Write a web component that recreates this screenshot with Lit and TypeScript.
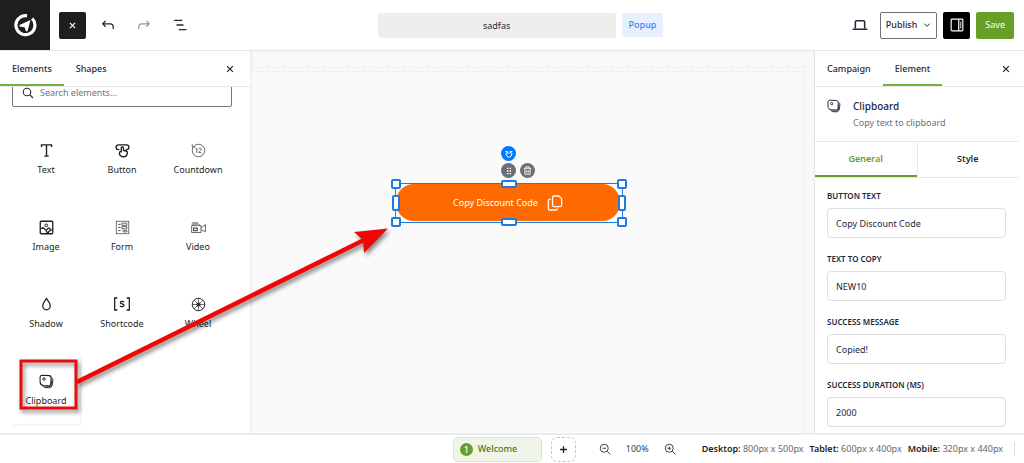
import { LitElement, html, css, svg, nothing } from "lit";
import { customElement, property, state } from "lit/decorators.js";
import { classMap } from "lit/directives/class-map.js";

const glyphs: Record<string, unknown> = {
  text: svg`<path d="M4 6.500V3h16v3.500M12 3v18M8.500 21h7" stroke-width="2.200"/>`,
  button: svg`<path d="M7 10.500H5.500a3.700 3.700 0 0 1 0-7.500h13a3.700 3.700 0 0 1 0 7.500H17M10 15V7.500a1.800 1.800 0 0 1 3.500 0V12l4 .8c1.500.3 2.500 1.200 2.300 3-.3 3.500-2 6.200-5.800 6.200-4.500 0-7-2.500-7-6 0-1.800 1-2.500 3-2.500" stroke-width="2.100"/>`,
  countdown: svg`<circle cx="12" cy="12" r="10" stroke-width="1.400"/><path d="M2 2v4.500h5M7.500 9.500l1.800-1.200V16M12.500 10c0-2.200 4-2.200 4 0 0 1.700-4 3.200-4 5.500h4.300" stroke-width="1.400"/>`,
  image: svg`<rect x="2" y="2" width="20" height="20" rx="1.500" stroke-width="2.100"/><circle cx="11.500" cy="8.500" r="2.200" stroke-width="1.600"/><path d="M3 14l3.500-2 5 5 2 4M12 16c1-2 3-3.500 4.500-3s1 2 2 2.500 2.500 0 3 1M15 21c0-3 2-4.500 4-4" stroke-width="2"/>`,
  form: svg`<rect x="2" y="2" width="20" height="20" stroke-width="1.300"/><path d="M5 7h4M5 12h4M5 17h4" stroke-width="1.600"/><path d="M11 5h8v3.500h-8zM11 10.500h8V14h-8zM13 16.500h6V19h-6z" stroke-width="1.400"/>`,
  video: svg`<path d="M1 9h15v11H1zM3 9V6.500h9L15 9M1 6l2-1.500h8M16 13l3.500-3.500H21L23 7v12l-2-1.500h-1.500L16 15" stroke-width="1.400"/><path d="M4 13h6v4H4z" stroke-width="1.900"/>`,
  shadow: svg`<path d="M12 2.500c3 4 6 7.500 6 11.500a6 6.500 0 0 1-12 0c0-4 3-7.500 6-11.500z" stroke-width="2"/>`,
  shortcode: svg`<path d="M5 3H1v18h4M19 3h4v18h-4" stroke-width="1.900"/><path d="M15 9c-1-1.200-5.500-1.400-5.500 1s5.500 1.500 5.500 4-4.800 2.400-6 .8" stroke-width="1.900"/>`,
  wheel: svg`<circle cx="12" cy="12" r="10" stroke-width="1.500"/><circle cx="12" cy="12" r="2.500" stroke-width="1.800"/><path d="M12 2v20M2 12h20M5 5l14 14M19 5L5 19" stroke-width="1"/>`,
  clipboard: svg`<path d="M5.500 2l10.500.6c2.300.2 3.400 1.300 3.300 3.400l-.5 9.500c-.2 2.400-1.300 3.500-3.500 3.300L7 18.500C4 18 2 16 1.800 13L1.700 6C1.700 3.200 2.800 2 5.500 2z" stroke-width="1.700"/><circle cx="8" cy="8" r="2" stroke-width="1.500"/><path d="M19.500 5.500c2 1 2.800 2.500 2.600 4.500l-.8 7c-.6 3.400-2.400 5-5.800 5l-5-.3c-2-.2-4-1.400-5-3.400M20.700 9l-.8 8c-.4 2.500-1.500 3.500-4 3.500H9" stroke-width="1.500"/>`,
  close: svg`<path d="M5 5l14 14M19 5L5 19" stroke-width="3"/>`,
  undo: svg`<path d="M8 5L3 10l5 5M3 10h13c3.500 0 5 2 5 5v4" stroke-width="2.200"/>`,
  redo: svg`<path d="M16 5l5 5-5 5M21 10H8c-3.500 0-5 2-5 5v4" stroke-width="2"/>`,
  outline: svg`<path d="M2 4h14M6 12h12M10 20h13" stroke-width="2.400"/>`,
  laptop: svg`<path d="M5 17V7.500C5 6 5.500 5.500 7 5.500h10c1.500 0 2 .5 2 2V17M1 18.500h22" stroke-width="2.300"/>`,
  panel: svg`<rect x="2" y="2" width="20" height="20" rx="1.500" stroke-width="2"/><path d="M15 2v20" stroke-width="2"/><path d="M18.500 6v12" stroke-width="1.500"/>`,
  chevron: svg`<path d="M4 8l8 8 8-8" stroke-width="3"/>`,
  search: svg`<circle cx="10" cy="10" r="7.500" stroke-width="2.200"/><path d="M16 16l6 6" stroke-width="2.200"/>`,
  zoomOut: svg`<circle cx="10.500" cy="10.500" r="8" stroke-width="2"/><path d="M16.500 16.500l6 6M7 10.500h7" stroke-width="2"/>`,
  zoomIn: svg`<circle cx="10.500" cy="10.500" r="8" stroke-width="2"/><path d="M16.500 16.500l6 6M7 10.500h7M10.500 7v7" stroke-width="2"/>`,
  plus: svg`<path d="M12 3v18M3 12h18" stroke-width="3.500"/>`,
  rotate: svg`<path d="M16 5.500A8.500 8.500 0 1 1 6.500 6.500M1 5h7.500v7.500M15.500 12V4.500H22" stroke-width="3"/>`,
  grip: svg`<path d="M8 2v4M16 2v4M8 10v4M16 10v4M8 18v4M16 18v4" stroke-width="4.500"/>`,
  trash: svg`<path d="M2 6h20M8 5V2h8v3M5 6v16h14V6M10 11v7M14 11v7" stroke-width="2.400"/>`,
  copy: svg`<path d="M10.500 1.500h7.500l4 4V15c0 1.500-.7 2.300-2.200 2.300h-9.300C9 17.300 8.300 16.500 8.300 15V3.800c0-1.500.7-2.300 2.200-2.300z" stroke-width="1.900"/><path d="M5.500 6.500H4.200C2.700 6.500 2 7.200 2 8.700v11.500c0 1.500.7 2.300 2.200 2.300h9.300c1.500 0 2.200-.8 2.200-2.200" stroke-width="1.900"/>`,
};

@customElement("app-icon")
class AppIcon extends LitElement {
  @property() name = "";
  @property({ type: Number }) size = 12;
  static styles = css`
    :host { display: inline-flex; flex: none; }
    svg { display: block; fill: none; stroke: currentColor; }
  `;
  render() {
    return html`<svg width=${this.size} height=${this.size} viewBox="0 0 24 24" aria-hidden="true">${glyphs[this.name] ?? nothing}</svg>`;
  }
}

@customElement("app-root")
class AppRoot extends LitElement {
  @state() private fields = [
    { id: "button-text", label: "BUTTON TEXT", value: "Copy Discount Code" },
    { id: "copy-text", label: "TEXT TO COPY", value: "NEW10" },
    { id: "success-message", label: "SUCCESS MESSAGE", value: "Copied!" },
    { id: "success-duration", label: "SUCCESS DURATION (MS)", value: "2000" },
  ];

  private elements = ["Text", "Button", "Countdown", "Image", "Form", "Video", "Shadow", "Shortcode", "Wheel", "Clipboard"];
  private faint = ["Countdown", "Form", "Video"];

  static styles = css`
    :host {
      display: grid;
      grid-template-rows: 50px minmax(0, 1fr) 30px;
      position: relative;
      height: 100vh;
      overflow: hidden;
      background: #fff;
      color: #1e293b;
      font: 9px/14px "Noto Sans", "Open Sans", sans-serif;
    }
    * { box-sizing: border-box; }
    button, input { font: inherit; color: inherit; margin: 0; }
    button { display: flex; align-items: center; justify-content: center; padding: 0; border: 0; background: none; }
    h2, p { margin: 0; }

    .topbar { display: grid; grid-template-columns: 1fr auto 1fr; align-items: center; }
    .group { display: flex; align-items: center; align-self: stretch; }
    .logo { display: grid; place-items: center; width: 50px; align-self: stretch; background: #1e1e1e; color: #fff; }
    .exit { width: 27px; height: 27px; margin-left: 9px; background: #1e1e1e; color: #fff; border-radius: 2px; }
    .tool { width: 36px; height: 27px; }
    .exit + .tool { margin-left: 4px; }
    .tool.device { width: 28px; }
    .dim { color: #949494; }
    .naming { display: flex; align-items: center; gap: 6px; margin-left: 17px; }
    .title { width: 238px; height: 25px; border: 0; border-radius: 3px; background: #eee; text-align: center; }
    .badge { padding: 5px 7px; border-radius: 2px; background: #e7f0fe; color: #3b82f6; font-weight: 500; }
    .actions { justify-content: flex-end; gap: 6px; padding-right: 10px; }
    .publish { height: 27px; gap: 6px; padding: 0 5px; border: 1px solid #6c7278; border-radius: 2px; font-weight: 500; }
    .toggle { width: 27px; height: 27px; background: #000; color: #fff; border-radius: 2px; }
    .save { height: 27px; padding: 0 9px; background: #689f27; color: #fff; border-radius: 2px; }

    .workspace { display: grid; grid-template-columns: 252px minmax(0, 1fr) 210px; border-top: 1px solid #e5e7e9; min-height: 0; }
    .side { display: flex; flex-direction: column; min-height: 0; overflow: hidden; background: #fff; }
    .library { border-right: 2px solid #f0f0f1; }
    .inspector { border-left: 1px solid #e2e4e7; }
    .tabs { display: flex; flex: none; height: 36px; border-bottom: 1px solid #e5e7e9; }
    .tab { padding: 2px 12px 0; border-bottom: 2px solid transparent; font-weight: 500; }
    .tab.on { border-color: #76b03c; }
    .tabs .close { margin-left: auto; width: 24px; }
    .library .close { margin-right: 8px; }
    .inspector .close { margin-right: 6px; }

    .scroll { flex: 1; min-height: 0; overflow: hidden; padding: 0 18px 0 12px; }
    .search { display: flex; align-items: center; gap: 6px; height: 28px; margin-top: -8px; padding: 0 9px; border: 1px solid #777; border-radius: 2px; }
    .search input { flex: 1; min-width: 0; border: 0; padding: 0; background: none; outline: 0; }
    .search input::placeholder { color: #757575; opacity: 1; }
    .catalog { display: grid; grid-template-columns: repeat(3, 1fr); gap: 9px 8px; margin-top: 18px; }
    .item { flex-direction: column; gap: 6px; height: 68px; color: #1e1e1e; line-height: 12px; }
    .item.picked { box-shadow: 1px 1px 2px #00000012; }
    .faint app-icon { color: #555; }

    .canvas {
      position: relative;
      padding: 20px 10px 0 0;
      background-color: #f8f9fa;
      background-image: linear-gradient(#f3f5f7 1px, transparent 1px), linear-gradient(90deg, #f3f5f7 1px, transparent 1px);
      background-size: 8px 8px;
      overflow: hidden;
    }
    .frame { height: 100%; background: #fafafa; border-top: 1px dashed #ececee; border-right: 1px solid #f0f0f2; }
    .selection { position: absolute; left: 143px; top: 132px; width: 228px; height: 40px; border: 1px solid #1f7ae0; }
    .cta { width: 224px; height: 37px; gap: 9px; border-radius: 18px; background: #ff6a00; color: #fff; }
    .handle { position: absolute; width: 10px; height: 10px; border: 2px solid #1f7ae0; border-radius: 2px; background: #fff; transform: translate(-50%, -50%); }
    .wide { width: 16px; height: 8px; }
    .tall { width: 8px; height: 16px; }
    .round { position: absolute; width: 15px; height: 15px; border-radius: 50%; background: #6b7075; color: #fff; }
    .turn { left: 105px; top: -38px; background: #007bff; }
    .move { left: 105px; top: -21px; }
    .remove { left: 124px; top: -21px; }

    .summary { display: flex; gap: 12px; align-items: flex-start; flex: none; height: 55px; margin-right: 6px; padding: 12px 12px 0; border-bottom: 1px solid #e5e7e9; }
    .summary h2 { font-size: 10px; line-height: 14px; font-weight: 500; }
    .summary p { margin-top: 3px; color: #6b7280; }
    .modes { display: grid; grid-template-columns: 1fr 1fr; flex: none; height: 36px; margin-right: 6px; border-bottom: 1px solid #e5e7e9; }
    .mode { font-weight: 600; border-bottom: 2px solid transparent; }
    .mode.on { color: #689f27; border-bottom-color: #689f27; }
    .mode + .mode { border-left: 1px solid #e5e7e9; }
    .form { display: grid; gap: 14px; padding: 11px 18px 0 12px; }
    .field { display: grid; gap: 5px; }
    .field label { font-size: 8px; line-height: 14px; font-weight: 600; }
    .field input { width: 100%; height: 30px; padding: 0 8px; border: 1px solid #dcdfe4; border-radius: 4px; background: #fff; }

    .footer { display: flex; align-items: center; justify-content: flex-end; border-top: 2px solid #ebecee; padding-right: 9px; background: #fff; }
    .step { gap: 5px; width: 89px; height: 25px; justify-content: flex-start; padding: 0 6px; border: 1px solid #d7e8c4; border-radius: 5px; background: #eff6e8; color: #4c7424; font-weight: 500; }
    .count { display: grid; place-items: center; width: 13px; height: 13px; border-radius: 50%; background: #689f27; color: #fff; }
    .add { width: 25px; height: 25px; margin: 0 23px 0 9px; border: 1px dashed #c4c7ca; border-radius: 6px; color: #1e1e1e; }
    .zoom { display: flex; align-items: center; gap: 15px; color: #3c434a; margin-right: 26px; }
    .sizes { display: flex; gap: 6px; color: #646970; white-space: nowrap; }
    .sizes b { font-weight: 600; color: #1e1e1e; }
    .rule { width: 1px; height: 14px; margin-left: 11px; background: #dcdcde; }

    .callout { position: absolute; left: 0; top: 0; pointer-events: none; filter: drop-shadow(2px 3px 2px #0007); }
  `;

  private icon(name: string, size: number) {
    return html`<app-icon name=${name} size=${size}></app-icon>`;
  }

  private handles() {
    const spots: [number, number, string][] = [
      [0, 0, ""], [50, 0, "wide"], [100, 0, ""], [0, 50, "tall"],
      [100, 50, "tall"], [0, 100, ""], [50, 100, "wide"], [100, 100, ""],
    ];
    return spots.map(([x, y, kind]) => html`<span class="handle ${kind}" style="left:${x}%;top:${y}%"></span>`);
  }

  render() {
    return html`
      <header class="topbar">
        <div class="group">
          <div class="logo">
            <svg width="24" height="24" viewBox="0 0 24 24" fill="none" aria-label="Logo">
              <path d="M19.200 5.500A9.500 9.500 0 1 1 14 2.800" stroke="#fff" stroke-width="3.200"/>
              <path d="M17.500 7L6.500 12v1.500l5 .8 1.500 4h1.500z" fill="#fff"/>
            </svg>
          </div>
          <button class="exit" aria-label="Exit">${this.icon("close", 9)}</button>
          <button class="tool" aria-label="Undo">${this.icon("undo", 14)}</button>
          <button class="tool dim" aria-label="Redo">${this.icon("redo", 14)}</button>
          <button class="tool" aria-label="Layers">${this.icon("outline", 14)}</button>
        </div>
        <div class="naming">
          <input class="title" aria-label="Campaign name" value="sadfas" />
          <span class="badge">Popup</span>
        </div>
        <div class="group actions">
          <button class="tool device" aria-label="Device">${this.icon("laptop", 16)}</button>
          <button class="publish">Publish ${this.icon("chevron", 8)}</button>
          <button class="toggle" aria-label="Toggle settings">${this.icon("panel", 14)}</button>
          <button class="save">Save</button>
        </div>
      </header>

      <main class="workspace">
        <aside class="side library">
          <nav class="tabs">
            <button class="tab on">Elements</button>
            <button class="tab">Shapes</button>
            <button class="close" aria-label="Close elements">${this.icon("close", 10)}</button>
          </nav>
          <div class="scroll">
            <label class="search">${this.icon("search", 12)}
              <input type="text" placeholder="Search elements..." aria-label="Search elements" />
            </label>
            <div class="catalog">
              ${this.elements.map((name) => html`
                <button class=${classMap({ item: true, faint: this.faint.includes(name), picked: name === "Clipboard" })}>
                  ${this.icon(name.toLowerCase(), name === "Shortcode" ? 16 : 15)}<span>${name}</span>
                </button>`)}
            </div>
          </div>
        </aside>

        <section class="canvas">
          <div class="frame"></div>
          <div class="selection">
            <button class="cta">Copy Discount Code ${this.icon("copy", 16)}</button>
            ${this.handles()}
            <button class="round turn" aria-label="Rotate">${this.icon("rotate", 8)}</button>
            <button class="round move" aria-label="Move">${this.icon("grip", 8)}</button>
            <button class="round remove" aria-label="Delete">${this.icon("trash", 9)}</button>
          </div>
        </section>

        <aside class="side inspector">
          <nav class="tabs">
            <button class="tab">Campaign</button>
            <button class="tab on">Element</button>
            <button class="close" aria-label="Close settings">${this.icon("close", 10)}</button>
          </nav>
          <div class="summary">
            ${this.icon("clipboard", 14)}
            <div><h2>Clipboard</h2><p>Copy text to clipboard</p></div>
          </div>
          <nav class="modes">
            <button class="mode on">General</button>
            <button class="mode">Style</button>
          </nav>
          <form class="form">
            ${this.fields.map((f) => html`
              <div class="field">
                <label for=${f.id}>${f.label}</label>
                <input id=${f.id} .value=${f.value} />
              </div>`)}
          </form>
        </aside>
      </main>

      <footer class="footer">
        <button class="step"><span class="count">1</span>Welcome</button>
        <button class="add" aria-label="Add step">${this.icon("plus", 9)}</button>
        <div class="zoom">
          <button aria-label="Zoom out">${this.icon("zoomOut", 12)}</button>
          <span>100%</span>
          <button aria-label="Zoom in">${this.icon("zoomIn", 12)}</button>
        </div>
        <div class="sizes">
          <span><b>Desktop:</b> 800px x 500px</span>
          <span><b>Tablet:</b> 600px x 400px</span>
          <span><b>Mobile:</b> 320px x 440px</span>
        </div>
        <span class="rule"></span>
      </footer>

      <svg class="callout" width="400" height="420" viewBox="0 0 400 420" aria-hidden="true">
        <rect x="21" y="361" width="55" height="47" fill="none" stroke="#e80c0c" stroke-width="3"/>
        <path d="M77 382L364 240" stroke="#f20505" stroke-width="4.500"/>
        <path d="M388 228.500L354 232L363 240L364 253Z" fill="#f20505"/>
      </svg>
    `;
  }
}
